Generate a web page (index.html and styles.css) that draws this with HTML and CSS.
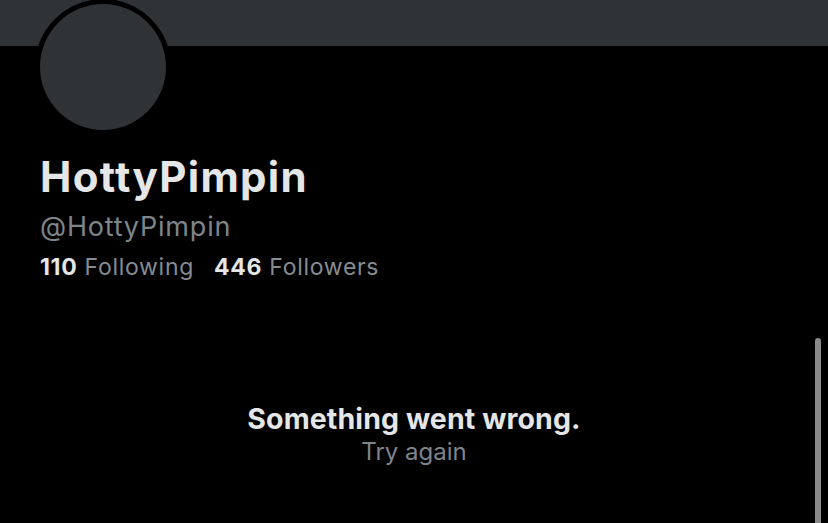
FILE: index.html
```html
<!DOCTYPE html>
<html lang="en">

<head>
    <meta charset="UTF-8">
    <meta name="viewport" content="width=device-width, initial-scale=1.0">
    <title>HottyPimpin</title>
    <link rel="stylesheet" href="styles.css">
</head>

<body>
    <div class="profile">
        <div class="banner"></div>

        <div class="avatar-ring">
            <div class="avatar"></div>
        </div>

        <div class="info">
            <h1 class="name">HottyPimpin</h1>
            <div class="handle">@HottyPimpin</div>
            <div class="stats">
                <span class="stat"><b>110</b> Following</span>
                <span class="stat"><b>446</b> Followers</span>
            </div>
        </div>

        <div class="error">
            <div class="error-title">Something went wrong.</div>
            <div class="error-retry">Try again</div>
        </div>

        <div class="scrollbar"></div>
    </div>
</body>

</html>
```

FILE: styles.css
```css
body {
    margin: 0;
    background: #000;
    font-family: Inter, "Noto Sans", sans-serif;
    overflow: hidden;
}

.profile {
    position: relative;
    height: 523px;
}

.banner {
    height: 46px;
    background: #2f3336;
}

.avatar-ring {
    width: 126px;
    height: 126px;
    margin: -47px 0 0 35px;
    border: 5px solid #000;
    border-radius: 50%;
    background: #000;
    position: relative;
}

.avatar {
    width: 126px;
    height: 126px;
    border-radius: 50%;
    background: #2f3336;
}

.info {
    padding: 0 0 0 40px;
}

.name {
    margin: 18px 0 0;
    font-size: 42px;
    font-weight: 700;
    line-height: 48px;
    color: #e4e6e7;
    letter-spacing: 1.3px;
}

.handle {
    margin-top: 9px;
    font-size: 27px;
    line-height: 34px;
    color: #7f8489;
    letter-spacing: 0.8px;
}

.stats {
    display: flex;
    gap: 20px;
    margin-top: 8px;
    font-size: 23px;
    line-height: 30px;
    color: #868b90;
    letter-spacing: 0.7px;
}

.stats b {
    font-weight: 700;
    color: #e4e6e7;
}

.error {
    margin-top: 120px;
    text-align: center;
}

.error-title {
    font-size: 28.5px;
    font-weight: 700;
    line-height: 34px;
    color: #e4e6e7;
    letter-spacing: 0.1px;
}

.error-retry {
    font-size: 24px;
    line-height: 32px;
    color: #7f8489;
}

.scrollbar {
    position: absolute;
    right: 7px;
    top: 338px;
    bottom: 0;
    width: 6px;
    border-radius: 3px 3px 0 0;
    background: #8a8a8a;
}
```
